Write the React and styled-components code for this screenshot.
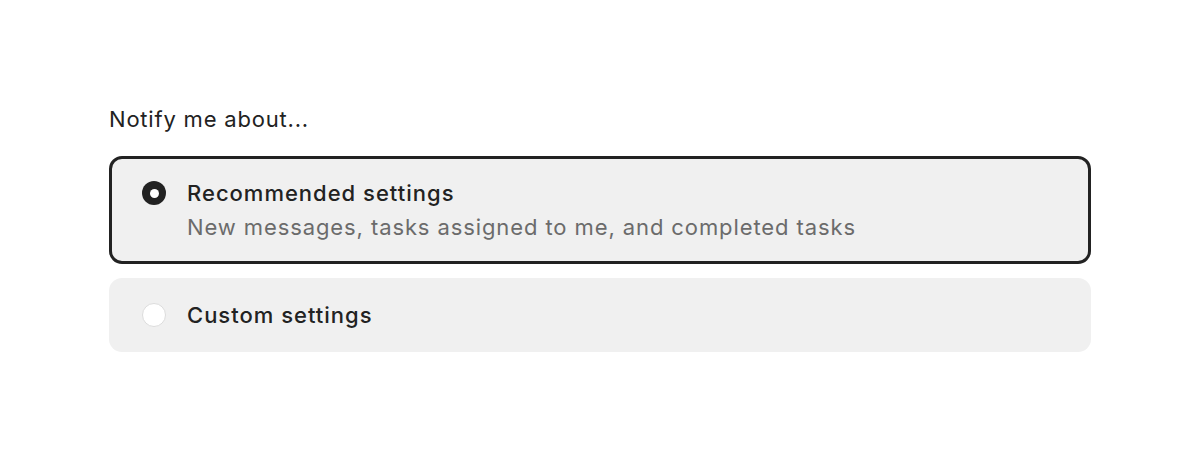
import styled, { createGlobalStyle } from "styled-components";
import { useState } from "react";

const GlobalStyle = createGlobalStyle`
  body {
    margin: 0;
    background: #ffffff;
    font-family: Inter, "Noto Sans", sans-serif;
    color: #222222;
  }
`;

const options = [
  {
    id: "recommended",
    title: "Recommended settings",
    detail: "New messages, tasks assigned to me, and completed tasks",
  },
  { id: "custom", title: "Custom settings" },
];

const App = () => {
  const [selected, setSelected] = useState("recommended");

  return (
    <>
      <GlobalStyle />
      <Page>
        <Fieldset>
          <Legend>Notify me about...</Legend>
          <OptionList>
            {options.map((opt) => (
              <Option
                key={opt.id}
                $active={selected === opt.id}
                onClick={() => setSelected(opt.id)}
              >
                <Radio $active={selected === opt.id} />
                <OptionText>
                  <Title>{opt.title}</Title>
                  {opt.detail && <Detail>{opt.detail}</Detail>}
                </OptionText>
              </Option>
            ))}
          </OptionList>
        </Fieldset>
      </Page>
    </>
  );
};

export default App;

const Page = styled.div`
  box-sizing: border-box;
  width: 1200px;
  height: 461px;
  padding: 102px 109px 0;
`;

const Fieldset = styled.div`
  display: flex;
  flex-direction: column;
  gap: 20px;
`;

const Legend = styled.div`
  font-size: 22px;
  line-height: 34px;
  font-weight: 400;
  letter-spacing: 0.8px;
  color: #222222;
`;

const OptionList = styled.div`
  display: flex;
  flex-direction: column;
  gap: 14px;
`;

const Option = styled.div`
  box-sizing: border-box;
  display: flex;
  align-items: flex-start;
  gap: 21px;
  padding: 17px 30px;
  border: 3px solid ${(p) => (p.$active ? "#222222" : "transparent")};
  border-radius: 13px;
  background: #f0f0f0;
  cursor: pointer;
`;

const Radio = styled.span`
  box-sizing: border-box;
  flex: none;
  width: 24px;
  height: 24px;
  margin-top: 5px;
  border-radius: 50%;
  background: ${(p) => (p.$active ? "#222222" : "#ffffff")};
  border: ${(p) => (p.$active ? "none" : "1px solid #dcdcdc")};
  display: flex;
  align-items: center;
  justify-content: center;
  &::after {
    content: "";
    display: ${(p) => (p.$active ? "block" : "none")};
    width: 9px;
    height: 9px;
    border-radius: 50%;
    background: #ffffff;
  }
`;

const OptionText = styled.div`
  display: flex;
  flex-direction: column;
`;

const Title = styled.div`
  font-size: 22px;
  line-height: 34px;
  font-weight: 500;
  letter-spacing: 1px;
  color: #222222;
`;

const Detail = styled.div`
  font-size: 22px;
  line-height: 34px;
  font-weight: 400;
  letter-spacing: 0.9px;
  color: #6b6b6b;
`;
